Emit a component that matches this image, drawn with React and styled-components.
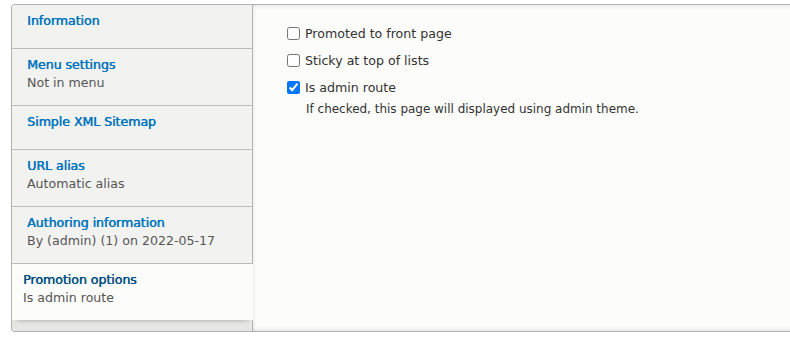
import React from 'react';
import styled, { createGlobalStyle } from 'styled-components';

const GlobalStyle = createGlobalStyle`
  html, body {
    margin: 0;
    padding: 0;
    background: #fff;
    overflow: hidden;
  }
  body {
    font-family: "DejaVu Sans", "Liberation Sans", sans-serif;
    font-size: 12.6px;
    color: #333;
  }
`;

const tabs = [
  { title: 'Information' },
  { title: 'Menu settings', summary: 'Not in menu' },
  { title: 'Simple XML Sitemap' },
  { title: 'URL alias', summary: 'Automatic alias' },
  { title: 'Authoring information', summary: 'By (admin) (1) on 2022-05-17' },
  { title: 'Promotion options', summary: 'Is admin route', selected: true },
];

const options = [
  { label: 'Promoted to front page' },
  { label: 'Sticky at top of lists' },
  {
    label: 'Is admin route',
    checked: true,
    description: 'If checked, this page will displayed using admin theme.',
  },
];

const App = () => (
  <Page>
    <GlobalStyle />
    <VerticalTabs>
      <Menu>
        {tabs.map((tab) => (
          <Tab key={tab.title} $selected={tab.selected}>
            <TabTitle $selected={tab.selected}>{tab.title}</TabTitle>
            {tab.summary && <TabSummary>{tab.summary}</TabSummary>}
          </Tab>
        ))}
        <MenuFiller />
      </Menu>

      <Pane>
        {options.map((opt) => (
          <FormItem key={opt.label}>
            <CheckRow>
              <Checkbox type="checkbox" defaultChecked={opt.checked} />
              <Label>{opt.label}</Label>
            </CheckRow>
            {opt.description && <Description>{opt.description}</Description>}
          </FormItem>
        ))}
      </Pane>
    </VerticalTabs>
  </Page>
);

export default App;

//-- styles
const Page = styled.div`
  padding: 4px 0 0 11px;
`;

const VerticalTabs = styled.div`
  display: flex;
  width: 800px;
  height: 328px;
  box-sizing: border-box;
  border: 1px solid #b3b3b3;
  border-right: 0;
  border-radius: 4px 0 0 4px;
  overflow: hidden;
`;

const Menu = styled.ul`
  display: flex;
  flex-direction: column;
  width: 241px;
  flex-shrink: 0;
  margin: 0;
  padding: 0;
  list-style: none;
  background: #e6e6e4;
`;

const Tab = styled.li`
  position: relative;
  box-sizing: border-box;
  min-height: 44px;
  padding: ${(p) => (p.$selected ? '7px 15px 13px 11px' : '7px 15px 13px 15px')};
  background: ${(p) => (p.$selected ? '#fcfcfa' : '#f2f2f0')};
  border-right: ${(p) => (p.$selected ? '0' : '1px solid #b3b3b3')};
  border-bottom: ${(p) => (p.$selected ? '0' : '1px solid #bdbdbd')};
  box-shadow: ${(p) => (p.$selected ? '0 5px 5px -5px rgba(0, 0, 0, 0.3)' : 'none')};
  z-index: ${(p) => (p.$selected ? 1 : 0)};
`;

const TabTitle = styled.div`
  line-height: 18px;
  letter-spacing: -0.05px;
  color: ${(p) => (p.$selected ? '#004f80' : '#0074bd')};
  text-shadow: 0.5px 0 0 currentColor;
`;

const TabSummary = styled.div`
  line-height: 18px;
  color: #555;
`;

const MenuFiller = styled.li`
  flex: 1;
  border-right: 1px solid #b3b3b3;
`;

const Pane = styled.div`
  flex: 1;
  padding: 20px 0 0 34px;
  background: #fcfcfa;
  box-shadow: inset 0 5px 5px -5px rgba(0, 0, 0, 0.15),
    inset 4px 0 4px -4px rgba(0, 0, 0, 0.12),
    inset 0 -5px 5px -5px rgba(0, 0, 0, 0.18);
`;

const FormItem = styled.div`
  margin-bottom: 9px;
`;

const CheckRow = styled.label`
  display: flex;
  align-items: flex-start;
  line-height: 18px;
`;

const Checkbox = styled.input`
  width: 13px;
  height: 13px;
  margin: 2px 5px 0 0;
  flex-shrink: 0;
`;

const Label = styled.span`
  color: #333;
`;

const Description = styled.div`
  margin: 3px 0 0 19px;
  font-size: 0.95em;
  line-height: 18px;
  color: #333;
`;
